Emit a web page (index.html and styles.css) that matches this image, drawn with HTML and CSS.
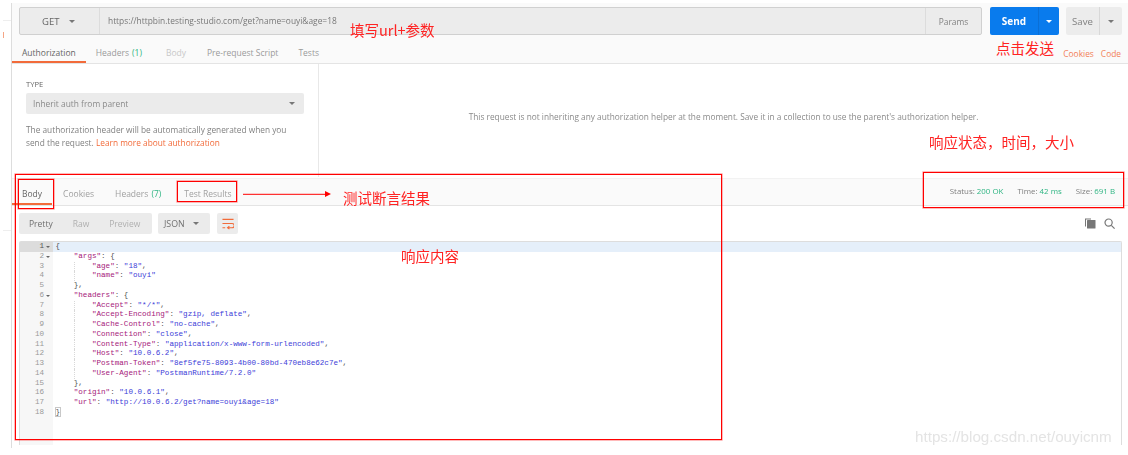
FILE: index.html
```html
<!DOCTYPE html>
<html lang="zh-CN">
<head>
<meta charset="utf-8">
<title>Postman</title>
<link rel="stylesheet" href="styles.css">
</head>
<body>
<div class="shot">
  <aside class="sliver"><span class="sliver-a"></span><span class="sliver-b"></span><span class="sliver-c"></span></aside>
  <main class="app">
    <section class="urlrow">
      <div class="urlgroup">
        <div class="method"><span>GET</span><i class="caret"></i></div>
        <div class="url">https://httpbin.testing-studio.com/get?name=ouyi&amp;age=18</div>
        <div class="params">Params</div>
      </div>
      <div class="send"><span class="send-l">Send</span><span class="send-r"><i class="caret white"></i></span></div>
      <div class="save"><span class="save-l">Save</span><span class="save-r"><i class="caret"></i></span></div>
    </section>
    <nav class="reqtabs">
      <span class="tab active auth-tab">Authorization</span>
      <span class="tab tab-headers">Headers <b class="green">(1)</b></span>
      <span class="tab faint">Body</span>
      <span class="tab">Pre-request Script</span>
      <span class="tab tab-tests">Tests</span>
      <span class="links"><a>Cookies</a><a>Code</a></span>
    </nav>
    <section class="authpane">
      <div class="authleft">
        <div class="type-label">TYPE</div>
        <div class="select"><span>Inherit auth from parent</span><i class="caret"></i></div>
        <div class="help">
          <div>The authorization header will be automatically generated when you</div>
          <div>send the request. <a>Learn more about authorization</a></div>
        </div>
      </div>
      <div class="authright">This request is not inheriting any authorization helper at the moment. Save it in a collection to use the parent's authorization helper.</div>
    </section>
    <nav class="restabs">
      <span class="rtab active">Body</span>
      <span class="rtab">Cookies</span>
      <span class="rtab">Headers <b class="green">(7)</b></span>
      <span class="rtab last">Test Results</span>
      <span class="stats">
        <span>Status: <b class="green">200 OK</b></span>
        <span>Time: <b class="green">42 ms</b></span>
        <span>Size: <b class="green">691 B</b></span>
      </span>
    </nav>
    <section class="toolbar">
      <div class="seg"><span class="dark">Pretty</span><span>Raw</span><span>Preview</span></div>
      <div class="lang"><span>JSON</span><i class="caret"></i></div>
      <div class="wrap">
        <svg width="12" height="12" viewBox="0 0 13 13" fill="none" stroke="#f26b3a" stroke-width="1.2"><path d="M0.5 1.5H12.5M0.5 6H11a1.8 1.8 0 0 1 0 4.5H6.5M8 9l-2 1.5L8 12M0.5 10.5H3.5"/></svg>
      </div>
      <div class="tools">
        <svg width="11" height="11" viewBox="0 0 11 11" fill="#777"><path d="M0 0.5h6v1H1v7H0z"/><rect x="2" y="2" width="8.5" height="8.5" rx="0.5"/></svg>
        <svg width="11" height="11" viewBox="0 0 11 11" fill="none" stroke="#777" stroke-width="1.2"><circle cx="4.6" cy="4.6" r="3.6"/><path d="M7.3 7.3l3.3 3.3"/></svg>
      </div>
    </section>
    <section class="editor">
      <div class="gutter">
        <div class="num on">1<i class="fold"></i></div>
        <div class="num">2<i class="fold"></i></div>
        <div class="num">3</div><div class="num">4</div><div class="num">5</div>
        <div class="num">6<i class="fold"></i></div>
        <div class="num">7</div><div class="num">8</div><div class="num">9</div><div class="num">10</div>
        <div class="num">11</div><div class="num">12</div><div class="num">13</div><div class="num">14</div>
        <div class="num">15</div><div class="num">16</div><div class="num">17</div><div class="num">18</div>
      </div>
      <div class="code">
        <div class="ln on">{</div>
        <div class="ln"><i class="in"></i><span class="k">"args"</span>: {</div>
        <div class="ln"><i class="in"></i><i class="in g"></i><span class="k">"age"</span>: <span class="s">"18"</span>,</div>
        <div class="ln"><i class="in"></i><i class="in g"></i><span class="k">"name"</span>: <span class="s">"ouyi"</span></div>
        <div class="ln"><i class="in"></i>},</div>
        <div class="ln"><i class="in"></i><span class="k">"headers"</span>: {</div>
        <div class="ln"><i class="in"></i><i class="in g"></i><span class="k">"Accept"</span>: <span class="s">"*/*"</span>,</div>
        <div class="ln"><i class="in"></i><i class="in g"></i><span class="k">"Accept-Encoding"</span>: <span class="s">"gzip, deflate"</span>,</div>
        <div class="ln"><i class="in"></i><i class="in g"></i><span class="k">"Cache-Control"</span>: <span class="s">"no-cache"</span>,</div>
        <div class="ln"><i class="in"></i><i class="in g"></i><span class="k">"Connection"</span>: <span class="s">"close"</span>,</div>
        <div class="ln"><i class="in"></i><i class="in g"></i><span class="k">"Content-Type"</span>: <span class="s">"application/x-www-form-urlencoded"</span>,</div>
        <div class="ln"><i class="in"></i><i class="in g"></i><span class="k">"Host"</span>: <span class="s">"10.0.6.2"</span>,</div>
        <div class="ln"><i class="in"></i><i class="in g"></i><span class="k">"Postman-Token"</span>: <span class="s">"8ef5fe75-8093-4b00-80bd-470eb8e62c7e"</span>,</div>
        <div class="ln"><i class="in"></i><i class="in g"></i><span class="k">"User-Agent"</span>: <span class="s">"PostmanRuntime/7.2.0"</span></div>
        <div class="ln"><i class="in"></i>},</div>
        <div class="ln"><i class="in"></i><span class="k">"origin"</span>: <span class="s">"10.0.6.1"</span>,</div>
        <div class="ln"><i class="in"></i><span class="k">"url"</span>: <span class="s">"http://10.0.6.2/get?name=ouyi&amp;age=18"</span></div>
        <div class="ln"><span class="match">}</span></div>
      </div>
    </section>
  </main>

  <div class="note n-url">填写url+参数</div>
  <div class="note n-send">点击发送</div>
  <div class="note n-status">响应状态，时间，大小</div>
  <div class="note n-test">测试断言结果</div>
  <div class="note n-body">响应内容</div>
  <div class="box b-main"></div>
  <div class="box b-body"></div>
  <div class="box b-test"></div>
  <div class="box b-stat"></div>
  <svg class="arrow" width="90" height="8" viewBox="0 0 90 8"><path d="M0 4.3H82" stroke="#f00" stroke-width="1"/><path d="M82 1l6 3-6 3z" fill="#f00"/></svg>
  <div class="watermark">https://blog.csdn.net/ouyicnm</div>
</div>
</body>
</html>
```
FILE: styles.css
```css
* { box-sizing: border-box; }
html, body { margin: 0; padding: 0; background: #fff; }
.shot {
  position: relative;
  width: 1128px;
  height: 455px;
  overflow: hidden;
  display: flex;
  font-family: "Open Sans", "Noto Sans", sans-serif;
  font-size: 8.5px;
  color: #808080;
  filter: blur(0.35px);
}
.sliver {
  position: relative;
  width: 12px;
  margin-top: 3px;
  flex: none;
  border-right: 1px solid #ddd;
  height: 445px;
}
.sliver-a { position: absolute; left: 3px; right: 0; top: 17px; height: 1px; background: #eee; }
.sliver-b { position: absolute; left: 3px; top: 29px; width: 1px; height: 6px; background: #f5a585; }
.sliver-c { position: absolute; left: 3px; right: 0; top: 227px; height: 1px; background: #eee; }
.app {
  width: 1116px;
  margin-top: 3px;
  display: flex;
  flex-direction: column;
  height: 442px;
}
.urlrow {
  height: 32px;
  padding: 4px 6px 0 7px;
  background: #fafafa;
  display: flex;
  flex: none;
}
.urlgroup {
  width: 963px;
  height: 28px;
  display: flex;
  align-items: stretch;
  background: #ececec;
  border: 1px solid #d0d0d0;
  border-radius: 2px;
}
.method {
  width: 80px;
  border-right: 1px solid #dcdcdc;
  display: flex;
  align-items: center;
  padding-left: 22px;
  gap: 10px;
  font-size: 9.5px;
  color: #666;
}
.url { flex: 1; display: flex; align-items: center; padding-left: 8px; color: #777; font-size: 8.4px; padding-bottom: 1px; }
.params { width: 56px; border-left: 1px solid #dcdcdc; display: flex; align-items: center; justify-content: center; font-size: 8.4px; }
.caret { display: inline-block; width: 0; height: 0; border-left: 3px solid transparent; border-right: 3px solid transparent; border-top: 3px solid #777; }
.caret.white { border-top-color: #fff; }
.send {
  margin-left: 8px;
  width: 69px;
  height: 28px;
  background: #097bed;
  border-radius: 2px;
  display: flex;
  color: #fff;
  font-weight: 700;
  font-size: 10px;
}
.send-l { width: 48px; display: flex; align-items: center; justify-content: center; }
.send-r { flex: 1; border-left: 1px solid #0a6fd6; display: flex; align-items: center; justify-content: center; }
.save {
  margin-left: 7px;
  width: 56px;
  height: 28px;
  background: #ececec;
  border-radius: 2px;
  display: flex;
  font-size: 9.6px;
  color: #808080;
}
.save-l { width: 34px; display: flex; align-items: center; justify-content: center; border-right: 1px solid #d8d8d8; }
.save-r { flex: 1; display: flex; align-items: center; justify-content: center; }
.reqtabs {
  height: 29px;
  flex: none;
  background: #fafafa;
  border-bottom: 1px solid #e4e4e4;
  display: flex;
  align-items: center;
  padding: 0 0 0 10px;
  gap: 21px;
  position: relative;
  color: #9a9a9a;
}
.tab { height: 100%; display: flex; align-items: center; gap: 3px; padding-top: 6px; }
.tab-headers { margin-left: -1px; }
.tab.faint { color: #c8c8c8; margin-left: 3px; }
.tab-tests { margin-left: -1px; }
.tab.active { color: #666; position: relative; }
.auth-tab::after { content: ""; position: absolute; left: -10px; right: -10px; bottom: 0; height: 2px; background: #f26b3a; }
.green { font-weight: 400; color: #2fb583; }
.links { margin-left: auto; padding: 9px 7px 0 0; display: flex; gap: 7px; color: #f26b3a; font-size: 8.4px; opacity: .85; }
.authpane { height: 113px; flex: none; display: flex; background: #fff; }
.authleft { width: 307px; flex: none; border-right: 1px solid #e8e8e8; padding: 15px 14px 0 14px; }
.type-label { font-size: 7.6px; color: #666; line-height: 10px; }
.select {
  margin-top: 4px;
  height: 21px;
  background: #ebebeb;
  border-radius: 2px;
  display: flex;
  align-items: center;
  justify-content: space-between;
  padding: 0 9px 0 7px;
  font-size: 8.4px;
  color: #8a8a8a;
}
.help { margin: 9px 0 0; line-height: 13px; font-size: 8.3px; color: #808080; white-space: nowrap; }
.help a, .links a { color: #f26b3a; }
.authright { flex: 1; text-align: center; padding-top: 47px; padding-right: 0; font-size: 8.3px; color: #8a8a8a; }
.restabs {
  height: 28px;
  margin-top: 1px;
  flex: none;
  background: #fafafa;
  border-bottom: 1px solid #e4e4e4;
  border-top: 1px solid #f2f2f2;
  display: flex;
  align-items: center;
  padding-left: 10px;
  gap: 21px;
  color: #a0a0a0;
}
.rtab { position: relative; height: 100%; display: flex; align-items: center; gap: 3px; padding-top: 2px; }
.rtab.last { margin-left: 2px; }
.rtab.active { color: #666; }
.rtab.active::after { content: ""; position: absolute; left: -10px; right: -10px; bottom: 0; height: 2px; background: #f26b3a; }
.stats { margin-left: auto; padding: 0 13px 3px 0; display: flex; gap: 14px; font-size: 7.9px; color: #808080; }
.toolbar { height: 35px; flex: none; padding: 7px 7px 0 7px; display: flex; gap: 6px; background: #fff; }
.seg {
  width: 133px;
  height: 21px;
  background: #ebebeb;
  border-radius: 2px;
  display: flex;
  align-items: center;
  gap: 20px;
  padding-left: 10px;
  color: #b0b0b0;
  font-size: 8.5px;
}
.dark { color: #707070; }
.lang {
  width: 52px;
  height: 21px;
  background: #ebebeb;
  border-radius: 2px;
  display: flex;
  align-items: center;
  justify-content: space-between;
  padding: 0 11px 0 6px;
  color: #707070;
  font-size: 8.8px;
}
.wrap { width: 21px; height: 21px; margin-left: 1px; background: #ececec; border-radius: 2px; display: flex; align-items: center; justify-content: center; }
.tools { margin-left: auto; display: flex; gap: 8px; padding: 5px 6px 0 0; }
.editor {
  height: 205px;
  margin: 0 6px 0 7px;
  display: flex;
  border-top: 1px solid #ddd;
  border-left: 1px solid #ddd;
  border-right: 1px solid #ddd;
  border-radius: 2px 2px 0 0;
  background: #fff;
}
.gutter { width: 33px; flex: none; background: #f7f7f7; font: 7.6px/9.75px "Liberation Mono", monospace; color: #999; }
.num { position: relative; height: 9.75px; padding-right: 9px; text-align: right; }
.num.on { background: #dcdcdc; color: #555; }
.fold { position: absolute; right: 3px; top: 4px; border-left: 2px solid transparent; border-right: 2px solid transparent; border-top: 2px solid #666; }
.code { flex: 1; font: 7.6px/9.75px "Liberation Mono", monospace; color: #555; }
.ln { height: 9.75px; padding-left: 2.5px; white-space: pre; }
.ln.on { background: #e5effa; }
.in { display: inline-block; width: 4ch; height: 9.75px; vertical-align: top; }
.in.g { border-left: 1px dotted #d8d8d8; }
.k { color: #a6197a; }
.s { color: #3c3cd8; }
.match { outline: 1px solid #c8c8c8; }
.note {
  position: absolute;
  color: #f22;
  font-family: "Noto Sans CJK SC", sans-serif;
  font-size: 14.5px;
  line-height: 18px;
  white-space: nowrap;
}
.n-url { left: 350px; top: 21px; }
.n-send { left: 996px; top: 39px; }
.n-status { left: 929px; top: 133px; }
.n-test { left: 343px; top: 189px; }
.n-body { left: 401px; top: 247px; }
.box { position: absolute; border: 1px solid #f00; box-shadow: 0 0 0 0.6px rgba(255, 0, 0, .45); }
.b-main { left: 15px; top: 174px; width: 707px; height: 266px; }
.b-body { left: 18px; top: 179px; width: 36px; height: 30px; }
.b-test { left: 177px; top: 181px; width: 60px; height: 21px; }
.b-stat { left: 923px; top: 172px; width: 201px; height: 36px; }
.arrow { position: absolute; left: 243px; top: 190px; }
.watermark {
  position: absolute;
  left: 915px;
  top: 428px;
  font-family: "Liberation Sans", Arial, sans-serif;
  font-size: 15.2px;
  line-height: 18px;
  color: #e4e4e4;
  white-space: nowrap;
}
```
